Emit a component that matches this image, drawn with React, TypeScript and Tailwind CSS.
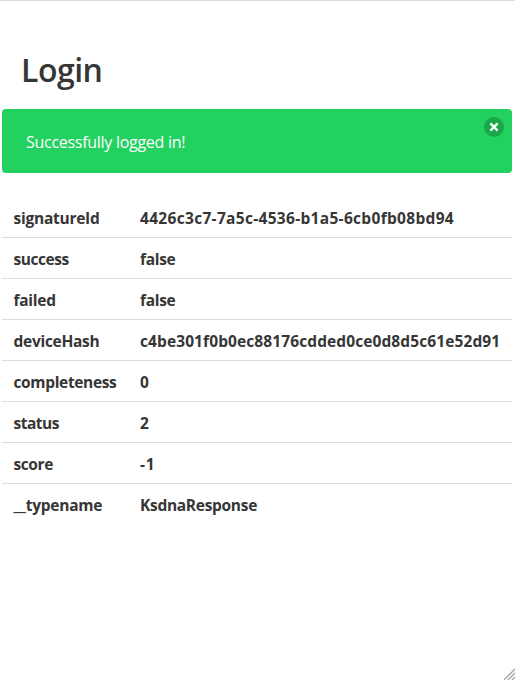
const rows = [
  { name: 'signatureId', value: '4426c3c7-7a5c-4536-b1a5-6cb0fb08bd94', nameTracking: 'tracking-[-0.25px]', valueTracking: 'tracking-[0.31px]' },
  { name: 'success', value: 'false', nameTracking: 'tracking-[-0.45px]', valueTracking: 'tracking-[-0.3px]' },
  { name: 'failed', value: 'false', nameTracking: 'tracking-[-0.25px]', valueTracking: 'tracking-[-0.3px]' },
  { name: 'deviceHash', value: 'c4be301f0b0ec88176cdded0ce0d8d5c61e52d91', nameTracking: 'tracking-[-0.28px]', valueTracking: 'tracking-[0.1px]' },
  { name: 'completeness', value: '0', nameTracking: 'tracking-[-0.35px]', valueTracking: 'tracking-normal' },
  { name: 'status', value: '2', nameTracking: 'tracking-[-0.5px]', valueTracking: 'tracking-normal' },
  { name: 'score', value: '-1', nameTracking: 'tracking-[-0.4px]', valueTracking: 'tracking-[0.8px]' },
  { name: '__typename', value: 'KsdnaResponse', nameTracking: 'tracking-[-0.25px]', valueTracking: 'tracking-[-0.3px]' },
];

export default function App() {
  return (
    <main className="relative h-[680px] w-full overflow-hidden border-t border-[#dbdbdb] bg-white pl-[2px] pr-[3px] font-['Open_Sans','Noto_Sans',sans-serif] text-[#363636]">
      <h1 className="mt-12 h-[60px] pl-[19px] text-[32px] font-semibold leading-[42px] tracking-[-0.5px]">Login</h1>
      <section className="relative h-16 rounded bg-[#23d160] pl-6 pr-10 pt-[21px] text-base leading-6 tracking-[-0.28px] text-white">
        Successfully logged in!
        <button aria-label="Close" className="absolute right-2 top-2 flex size-5 items-center justify-center rounded-full bg-[#1ca74d]">
          <svg viewBox="0 0 20 20" className="size-5" stroke="white" strokeWidth="2.2"><path d="m6.4 6.4 7.2 7.2m0-7.2-7.2 7.2" /></svg>
        </button>
      </section>
      <table className="mt-6 w-full table-fixed border-separate border-spacing-0 text-left text-[15.5px] font-bold leading-6">
        <colgroup><col className="w-[126px]" /><col /></colgroup>
        <tbody>
          {rows.map((row) => (
            <tr key={row.name} className="group h-[41px]">
              <td className={`whitespace-nowrap border-b border-[#dbdbdb] pb-[7px] pl-[11.5px] pt-[9px] group-last:border-transparent ${row.nameTracking}`}>{row.name}</td>
              <td className={`whitespace-nowrap border-b border-[#dbdbdb] pb-[7px] pl-3 pt-[9px] group-last:border-transparent ${row.valueTracking}`}>{row.value}</td>
            </tr>
          ))}
        </tbody>
      </table>
      <svg className="absolute bottom-0 right-0 size-3" viewBox="0 0 12 12" stroke="#a6a6a6" strokeWidth="1.3"><path d="M1 12 12 1M5 12l7-7M9 12l3-3" /></svg>
    </main>
  );
}
